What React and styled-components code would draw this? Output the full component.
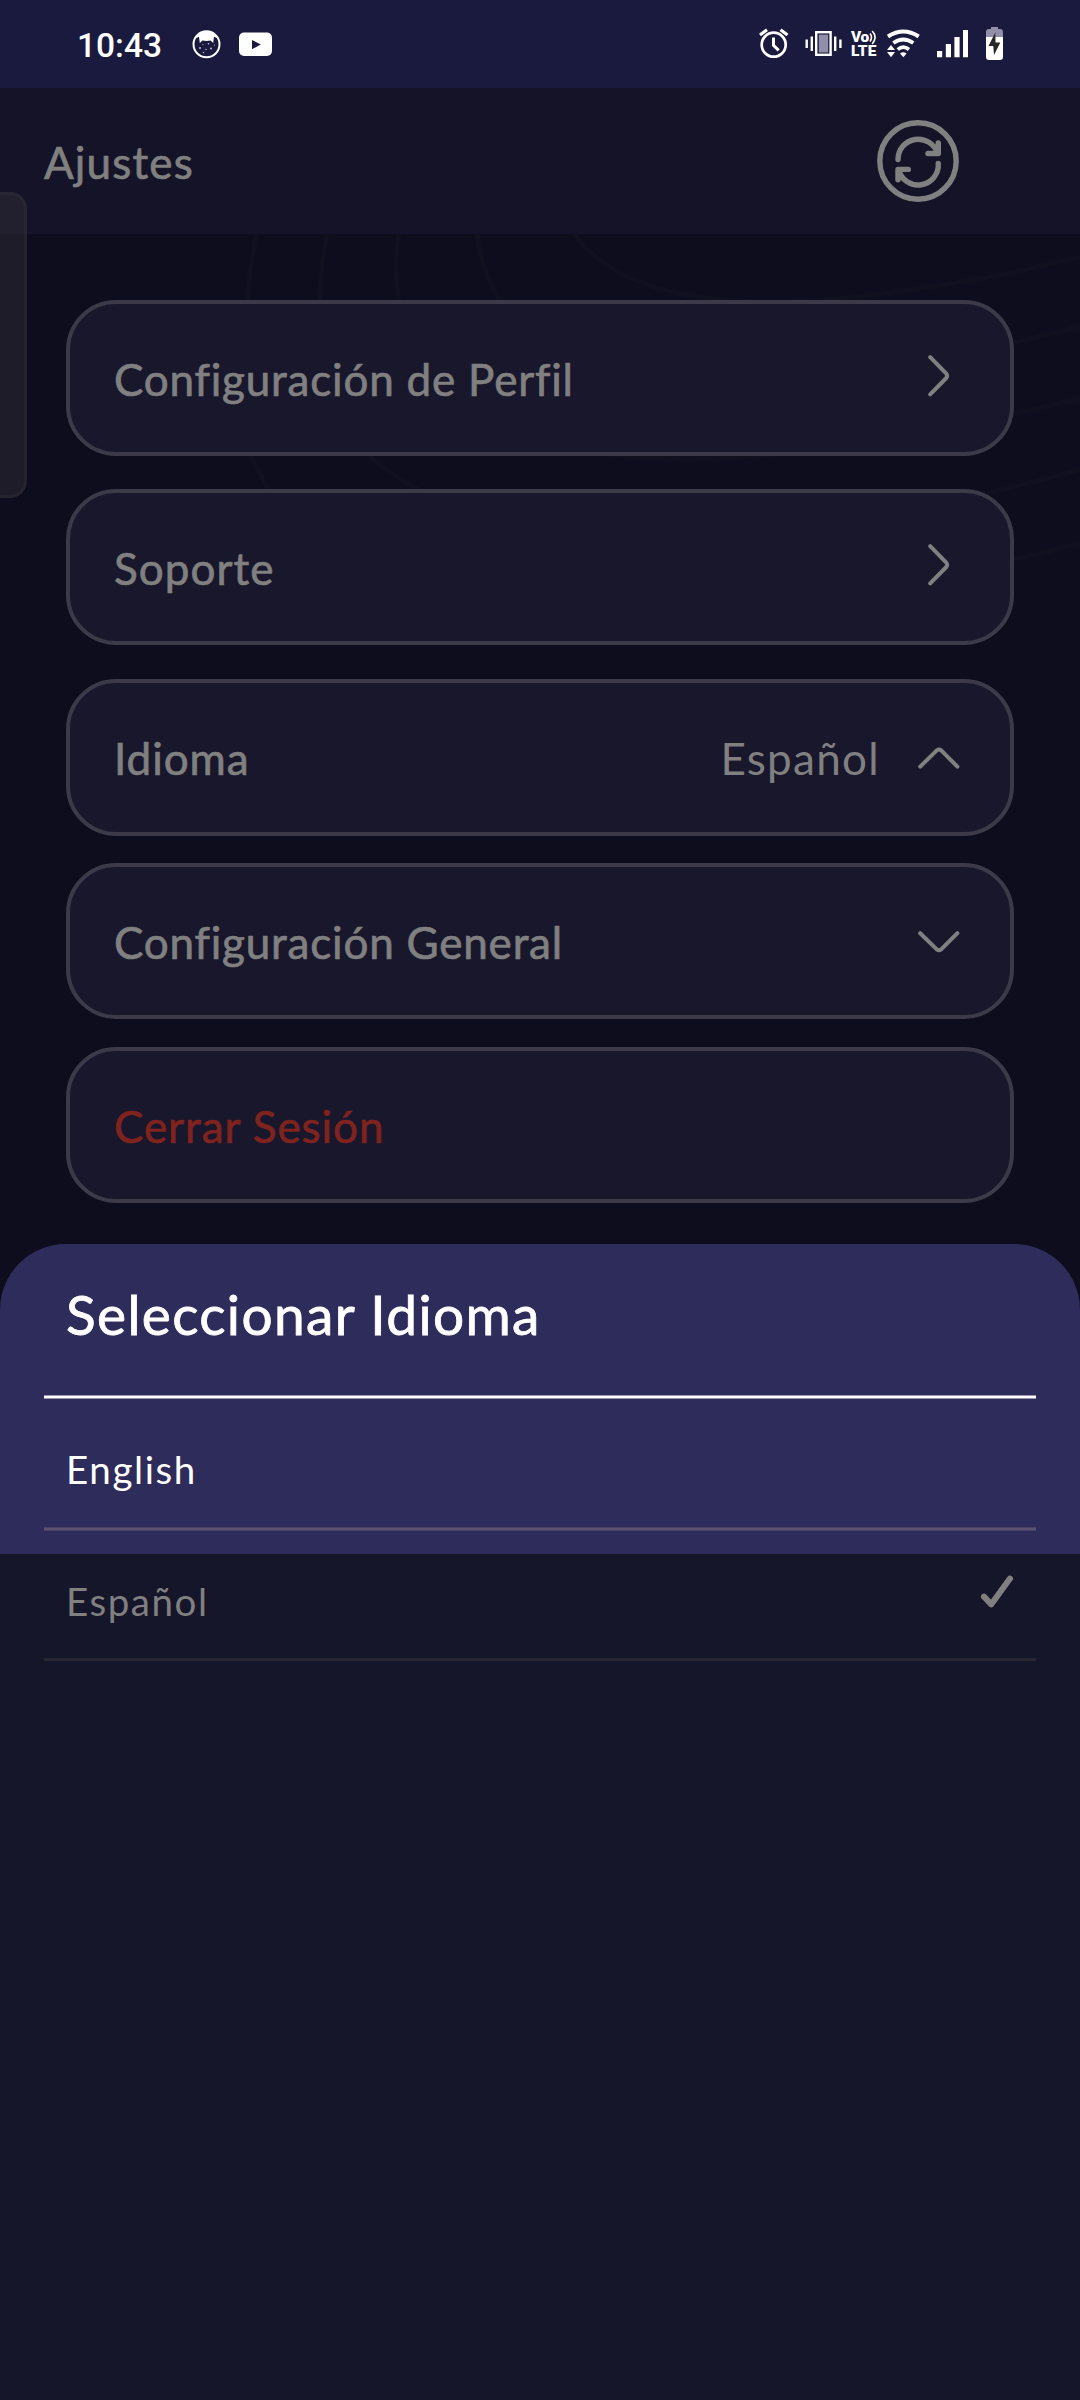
import React from "react";
import styled, { createGlobalStyle } from "styled-components";

const Global = createGlobalStyle`
  *, *::before, *::after { box-sizing: border-box; }
  body { margin: 0; background: #0e0d1e; }
`;

const Screen = styled.main`
  position: relative;
  display: flex;
  flex-direction: column;
  width: 1080px;
  height: 2400px;
  overflow: hidden;
  background: #0e0d1e;
  color: #808080;
  font-family: Lato, "Open Sans", sans-serif;
`;

const StatusBar = styled.header`
  display: flex;
  justify-content: space-between;
  height: 88px;
  padding: 0 76px 0 77px;
  background: #1a1a3e;
  color: #fff;
`;

const StatusGroup = styled.div`
  display: flex;
  align-items: center;
`;

const Clock = styled.time`
  width: 115px;
  font: 500 33.5px/88px Roboto, sans-serif;
  padding-top: 3px;
`;

const StatusIcon = styled.svg`
  display: block;
  flex: none;
  height: 88px;
  margin-left: ${(p) => p.$gap || 0}px;
`;

const NetworkBadge = styled.div`
  display: flex;
  flex-direction: column;
  width: 27px;
  margin-left: 8px;
  font: 900 15.5px/14px Roboto, sans-serif;
`;

const BadgeLine = styled.div`
  display: flex;
  align-items: center;
  height: 14px;
  letter-spacing: ${(p) => p.$track}px;
`;

const AppBar = styled.div`
  display: flex;
  align-items: center;
  justify-content: space-between;
  height: 146px;
  padding: 0 121px 0 44px;
  background: #151327;
`;

const Label = styled.span`
  padding-top: ${(p) => p.$drop ?? 2}px;
  font-size: 44px;
  line-height: 60px;
  white-space: nowrap;
  letter-spacing: ${(p) => p.$track || 0}px;
  -webkit-text-stroke: ${(p) => (p.$light ? 0 : 0.7)}px currentColor;
`;

const Pattern = styled.svg`
  position: absolute;
  left: 0;
  top: 234px;
  width: 1080px;
  height: 446px;
  fill: none;
  stroke: #11101f;
  stroke-width: 5;
`;

const Menu = styled.nav`
  position: relative;
  display: flex;
  flex-direction: column;
  height: 1010px;
  padding: 66px 66px 0;
`;

const Card = styled.div`
  display: flex;
  align-items: center;
  flex: none;
  height: ${(p) => p.$height || 156}px;
  margin-bottom: ${(p) => p.$after}px;
  padding: 0 ${(p) => p.$end || 50}px 0 44px;
  border: 4px solid #3c3a49;
  border-radius: 50px;
  background: #19172c;
  color: ${(p) => (p.$danger ? "#7f231e" : "#808080")};
`;

const Trailing = styled.div`
  display: flex;
  align-items: center;
  gap: 38px;
  margin-left: auto;
`;

const Glyph = styled.svg`
  display: block;
  flex: none;
  fill: none;
  stroke: #808080;
  stroke-width: ${(p) => p.$weight || 4};
  stroke-linecap: round;
  stroke-linejoin: round;
  margin-bottom: ${(p) => p.$lift || 0}px;
`;

const SheetTop = styled.section`
  position: relative;
  height: 310px;
  padding: 0 44px;
  border-radius: 66px 66px 0 0;
  background: #2e2c5a;
  color: #fff;
`;

const SheetRest = styled.section`
  flex: 1;
  padding: 0 44px;
  background: #16162a;
`;

const SheetTitle = styled.h1`
  height: 151px;
  margin: 0;
  padding: 0 22px;
  font-size: 55px;
  font-weight: 400;
  line-height: 141px;
  letter-spacing: ${(p) => p.$track}px;
  -webkit-text-stroke: 0.8px currentColor;
`;

const Rule = styled.div`
  height: ${(p) => (p.$thin ? 3 : 4)}px;
  background: ${(p) =>
    p.$thin
      ? "#2a2735"
      : `linear-gradient(${p.$edge} 1px, ${p.$core} 1px 3px, ${p.$edge} 3px)`};
`;

const Option = styled.div`
  display: flex;
  align-items: center;
  justify-content: space-between;
  height: ${(p) => p.$height}px;
  padding: ${(p) => p.$top || 0}px 22px ${(p) => p.$bottom || 0}px;
  font-size: 38.5px;
  letter-spacing: ${(p) => p.$track}px;
`;

const EdgeHandle = styled.div`
  position: absolute;
  left: 0;
  top: 192px;
  width: 27px;
  height: 306px;
  border: 3px solid rgba(70, 66, 70, 0.2);
  border-left: 0;
  border-radius: 0 17px 17px 0;
  background: rgba(60, 56, 61, 0.35);
`;

function ChevronRight() {
  return (
    <Glyph width="22" height="42" viewBox="0 0 22 42" $lift={5}>
      <path d="M2.2 2.2L18.3 18.6Q20 20.8 18.3 23L2.2 39.4" />
    </Glyph>
  );
}

function ChevronVertical({ up }) {
  return (
    <Glyph width="42" height="22" viewBox="0 0 42 22" $lift={up ? 0 : -1}>
      {up ? (
        <path d="M2.2 19.6L18.8 3.4Q21 1.6 23.2 3.4L39.4 19.6" />
      ) : (
        <path d="M2.2 2.2L18.8 18.4Q21 20.2 23.2 18.4L39.4 2.2" />
      )}
    </Glyph>
  );
}

export default function App() {
  return (
    <Screen>
      <Global />
      <StatusBar>
        <StatusGroup>
          <Clock>10:43</Clock>
          <StatusIcon width="30" viewBox="192 0 30 88">
            <circle cx="206.5" cy="44.3" r="13" fill="none" stroke="#fff" strokeWidth="2" />
            <path
              d="M195.2 38.5A12.8 12.8 0 0 1 217.8 38.5L214 36.8L213.2 43L210.5 40.6Q206.5 41.4 202.5 40.6L199.8 43L199 36.8Z"
              fill="#fff"
            />
            <g fill="#c9c9dc">
              <circle cx="200" cy="48" r=".9" />
              <circle cx="203" cy="44.5" r=".6" />
              <circle cx="208.5" cy="43.8" r=".8" />
              <circle cx="206" cy="49.5" r=".7" />
              <circle cx="211" cy="48.5" r=".9" />
              <circle cx="214.5" cy="45" r=".6" />
              <circle cx="203.5" cy="52.5" r=".7" />
            </g>
          </StatusIcon>
          <StatusIcon $gap={17} width="34" viewBox="239 0 34 88">
            <rect x="239" y="32.5" width="33" height="23.5" rx="5" fill="#fff" />
            <path d="M252 40V49.2L260.8 44.6Z" fill="#1a1a3e" />
          </StatusIcon>
        </StatusGroup>
        <StatusGroup>
          <StatusIcon width="31" viewBox="758 0 31 88" fill="none" stroke="#fff">
            <circle cx="773.7" cy="44.7" r="12" strokeWidth="2.7" />
            <path d="M773.5 37.5V45.3L778.7 50.3" strokeWidth="3" />
            <path d="M760 35L767 29.8M780.5 29.8L787.5 35" strokeWidth="3.2" />
          </StatusIcon>
          <StatusIcon $gap={16} width="38" viewBox="805 0 38 88">
            <rect x="816.2" y="32.2" width="14.4" height="22.6" fill="#1a1a3e" stroke="#fff" strokeWidth="2.4" />
            <rect x="818.8" y="34.6" width="9.4" height="17.9" fill="#908ea8" />
            <path
              d="M805.5 39.5h2.4v8.5h-2.4zM810.6 36.5h2.4v14.5h-2.4zM834 36.5h2.4v14.5h-2.4zM839.2 39.5h2.4v8.5h-2.4z"
              fill="#fff"
            />
          </StatusIcon>
          <NetworkBadge>
            <BadgeLine $track={-0.4}>
              Vo
              <svg width="8" height="15" viewBox="0 0 8 15" fill="none" stroke="#fff" strokeWidth="1.6">
                <path d="M1 3.5Q4 7 1 11.5M3.2 1Q9 7 3.2 14" />
              </svg>
            </BadgeLine>
            <BadgeLine $track={0}>LTE</BadgeLine>
          </NetworkBadge>
          <StatusIcon $gap={8} width="35" viewBox="886 0 35 88" fill="none" stroke="#fff">
            <path d="M888 36.5Q903.3 26.5 918.7 36.5" strokeWidth="4" />
            <path d="M893.3 43Q903.3 36 913.3 43" strokeWidth="3.8" />
            <path d="M897.7 49.5Q903.3 44.7 909 49.5" strokeWidth="3.6" />
            <path
              d="M900 53.5Q903.3 50.8 906.6 53.5L903.3 57.2ZM887 50L891 45L895 50ZM887 52L891 57.2L895 52Z"
              fill="#fff"
              stroke="none"
            />
          </StatusIcon>
          <StatusIcon $gap={16} width="31" viewBox="937 0 31 88" fill="#fff">
            <path d="M937 51h5.2v6.3H937zM945.8 44h5.2v13.3h-5.2zM954.4 37h5.2v20.3h-5.2zM963 30h5v27.3h-5z" />
          </StatusIcon>
          <StatusIcon $gap={18} width="18" viewBox="986 0 18 88">
            <path d="M986 37V32Q986 29 989 29H991V27H998V29H1000Q1003 29 1003 32V37Z" fill="#908ea8" />
            <path d="M986 37H1003V57Q1003 60 1000 60H989Q986 60 986 57Z" fill="#fff" />
            <path d="M995.3 32.5L988.5 46H993.3L994 55L1000.3 42.5H995.5Z" fill="#262626" />
          </StatusIcon>
        </StatusGroup>
      </StatusBar>

      <AppBar>
        <Label $track={1.15}>Ajustes</Label>
        <Glyph width="82" height="82" viewBox="877 120 82 82" $weight={5.4}>
          <circle cx="918" cy="161" r="38.2" />
          <path d="M898 159.6A20.2 20.2 0 0 1 937.5 153.5M938.3 143V153.5H928M938.3 163.5A20.2 20.2 0 0 1 898.5 169.5M898 179.8V169.4H908.3" />
        </Glyph>
      </AppBar>

      <Pattern viewBox="0 234 1080 446">
        <path d="M573 232C610 285 680 299 760 302S1000 278 1080 257" />
        <path d="M477 232C480 260 488 280 499 300C560 420 850 385 1080 327" />
        <path d="M399 232C390 290 402 330 430 375C480 440 590 457 675 459C800 462 960 425 1080 399" />
        <path d="M327 232C310 330 320 405 369 456C385 470 400 480 417 489C560 570 820 540 1080 470" />
        <path d="M257 232C240 320 240 400 251 456L268 489C340 640 800 620 1080 543" />
      </Pattern>

      <Menu>
        <Card $after={33} $end={60}>
          <Label $track={0.8}>Configuración de Perfil</Label>
          <Trailing><ChevronRight /></Trailing>
        </Card>
        <Card $after={34} $end={60}>
          <Label $track={1.05}>Soporte</Label>
          <Trailing><ChevronRight /></Trailing>
        </Card>
        <Card $height={157} $after={27}>
          <Label $track={0.95} $drop={0}>Idioma</Label>
          <Trailing>
            <Label $light $track={1.3} $drop={0}>Español</Label>
            <ChevronVertical up />
          </Trailing>
        </Card>
        <Card $after={28}>
          <Label $track={0.8}>Configuración General</Label>
          <Trailing><ChevronVertical /></Trailing>
        </Card>
        <Card $after={0} $danger>
          <Label $track={0.95}>Cerrar Sesión</Label>
        </Card>
      </Menu>

      <SheetTop>
        <SheetTitle $track={1.35}>Seleccionar Idioma</SheetTitle>
        <Rule $core="#ffffff" $edge="#9a98b0" />
        <Option $height={128} $top={12} $track={1.6}>English</Option>
        <Rule $core="#5a5270" $edge="#484267" />
      </SheetTop>
      <SheetRest>
        <Option $height={104} $bottom={10} $track={1.55}>
          <span>Español</span>
          <Glyph width="34" height="34" viewBox="980 1574 34 34" $weight={6} $lift={18}>
            <path d="M984 1595.7L991.3 1603.3L1010 1577.6" />
          </Glyph>
        </Option>
        <Rule $thin />
      </SheetRest>
      <EdgeHandle />
    </Screen>
  );
}
